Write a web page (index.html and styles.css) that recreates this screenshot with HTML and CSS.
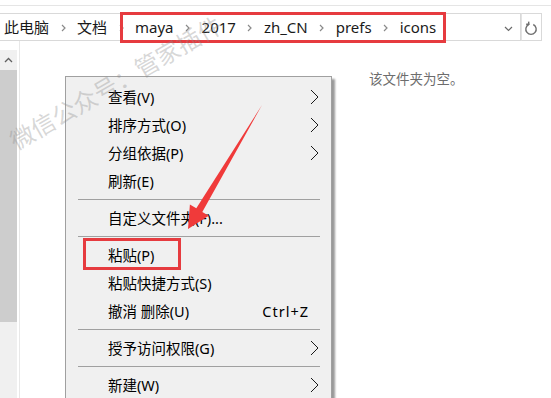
FILE: index.html
```html
<!DOCTYPE html>
<html lang="zh-CN">
<head>
    <meta charset="UTF-8">
    <meta name="viewport" content="width=device-width, initial-scale=1.0">
    <title>icons</title>
    <link rel="stylesheet" href="styles.css">
</head>
<body>
    <div class="ribbon-edge"></div>
    <div class="address-row">
        <div class="address">
            <span class="crumb">此电脑</span>
            <span class="sep"><svg width="5" height="8"><polyline points="1,1 4,4 1,7"/></svg></span>
            <span class="crumb">文档</span>
            <span class="sep"><svg width="5" height="8"><polyline points="1,1 4,4 1,7"/></svg></span>
            <span class="crumb">maya</span>
            <span class="sep"><svg width="5" height="8"><polyline points="1,1 4,4 1,7"/></svg></span>
            <span class="crumb">2017</span>
            <span class="sep"><svg width="5" height="8"><polyline points="1,1 4,4 1,7"/></svg></span>
            <span class="crumb">zh_CN</span>
            <span class="sep"><svg width="5" height="8"><polyline points="1,1 4,4 1,7"/></svg></span>
            <span class="crumb">prefs</span>
            <span class="sep"><svg width="5" height="8"><polyline points="1,1 4,4 1,7"/></svg></span>
            <span class="crumb">icons</span>
            <span class="drop"><svg width="9" height="6"><polyline points="1,1 4.5,4.5 8,1"/></svg></span>
        </div>
        <div class="refresh">
            <svg width="15" height="15" viewBox="0 0 15 15">
                <path d="M9.3 3.5 A5.2 5.2 0 1 1 4.7 3.5"/>
                <polyline points="2.2,3.2 4.9,3.3 4.6,0.7"/>
            </svg>
        </div>
    </div>

    <div class="main">
        <div class="nav">
            <div class="scroll">
                <div class="scroll-up"><svg width="9" height="6"><polyline points="1,5 4.5,1.5 8,5"/></svg></div>
                <div class="thumb"></div>
            </div>
        </div>
        <div class="content">
            <p class="empty">该文件夹为空。</p>
        </div>
    </div>

    <div class="path-mark"></div>

    <ul class="menu">
        <li class="item">查看(V)<span class="sub"><svg width="9" height="16"><polyline points="1,1 8,8 1,15"/></svg></span></li>
        <li class="item">排序方式(O)<span class="sub"><svg width="9" height="16"><polyline points="1,1 8,8 1,15"/></svg></span></li>
        <li class="item">分组依据(P)<span class="sub"><svg width="9" height="16"><polyline points="1,1 8,8 1,15"/></svg></span></li>
        <li class="item">刷新(E)</li>
        <li class="line"></li>
        <li class="item">自定义文件夹(F)...</li>
        <li class="line"></li>
        <li class="item">粘贴(P)</li>
        <li class="item">粘贴快捷方式(S)</li>
        <li class="item">撤消 删除(U)<span class="key">Ctrl+Z</span></li>
        <li class="line"></li>
        <li class="item">授予访问权限(G)<span class="sub"><svg width="9" height="16"><polyline points="1,1 8,8 1,15"/></svg></span></li>
        <li class="line"></li>
        <li class="item">新建(W)<span class="sub"><svg width="9" height="16"><polyline points="1,1 8,8 1,15"/></svg></span></li>
    </ul>

    <div class="paste-mark"></div>

    <svg class="arrow" width="90" height="135" viewBox="0 0 90 135">
        <polygon points="82,5 22.3,111.9 28.8,115.7 8,129 9.9,104.5 16.3,108.3"/>
    </svg>

    <div class="watermark">微信公众号：管家插件</div>
</body>
</html>
```

FILE: styles.css
```css
* {
    padding: 0;
    margin: 0;
    box-sizing: border-box;
}

body {
    width: 551px;
    height: 398px;
    overflow: hidden;
    position: relative;
    background: #fff;
    font-family: "Noto Sans", "Noto Sans CJK SC", sans-serif;
    color: #000;
    display: flex;
    flex-direction: column;
}

.ribbon-edge {
    height: 6px;
    border-bottom: 1px solid #e5e5e5;
}

/* address bar */
.address-row {
    display: flex;
    height: 28px;
    margin-top: 7px;
    margin-right: 9px;
}

.address {
    flex: 1;
    display: flex;
    align-items: center;
    border: 1px solid #d9d9d9;
    border-left: 0;
    padding-left: 4px;
    font-size: 15px;
    line-height: 20px;
    color: #1a1a1a;
}

.sep {
    width: 28px;
    display: flex;
    justify-content: center;
    padding-top: 1px;
}

.sep polyline {
    fill: none;
    stroke: #8a8a8a;
    stroke-width: 1.2;
}

.drop {
    margin-left: auto;
    margin-right: 7px;
    display: flex;
    padding-top: 4px;
}

.drop polyline {
    fill: none;
    stroke: #6a6a6a;
    stroke-width: 1.2;
}

.refresh {
    width: 21px;
    border: 1px solid #d9d9d9;
    border-left: 1px solid #e3e3e3;
    display: flex;
    align-items: center;
    justify-content: center;
    padding-top: 3px;
}

.refresh path,
.refresh polyline {
    fill: none;
    stroke: #6e6e6e;
    stroke-width: 1.4;
}

/* body of the window */
.main {
    flex: 1;
    display: flex;
}

.nav {
    width: 20px;
    border-right: 1px solid #e8e8e8;
    padding-top: 9px;
    display: flex;
}

.scroll {
    width: 17px;
    background: #f0f0f0;
}

.scroll-up {
    height: 20px;
    display: flex;
    justify-content: center;
    padding-top: 7px;
}

.scroll-up polyline {
    fill: none;
    stroke: #606060;
    stroke-width: 1.3;
}

.thumb {
    height: 252px;
    background: #cdcdcd;
}

.content {
    flex: 1;
}

.empty {
    margin-left: 349px;
    padding-top: 28px;
    font-size: 13.5px;
    line-height: 20px;
    color: #6d6d6d;
}

/* context menu */
.menu {
    position: absolute;
    left: 65px;
    top: 76px;
    width: 267px;
    height: 340px;
    list-style: none;
    background: #f0f0f0;
    border: 1px solid #a0a0a0;
    box-shadow: 3px 3px 2px rgba(0, 0, 0, 0.4);
    padding-top: 6px;
    font-size: 14.5px;
}

.item {
    height: 28px;
    line-height: 28px;
    display: flex;
    align-items: center;
    padding-left: 42px;
    padding-right: 12px;
}

.sub {
    margin-left: auto;
    display: flex;
}

.sub polyline {
    fill: none;
    stroke: #1a1a1a;
    stroke-width: 1;
}

.key {
    margin-left: auto;
    margin-right: 10px;
    letter-spacing: 1px;
}

.line {
    height: 1px;
    background: #a0a0a0;
    margin: 4px 11px 4px 12px;
}

/* red marks */
.path-mark {
    position: absolute;
    left: 120px;
    top: 12px;
    width: 326px;
    height: 31px;
    border: 3px solid #e63b3f;
}

.paste-mark {
    position: absolute;
    left: 83px;
    top: 238px;
    width: 98px;
    height: 32px;
    border: 3px solid #e63b3f;
}

.arrow {
    position: absolute;
    left: 180px;
    top: 100px;
}

.arrow polygon {
    fill: #f03a3a;
}

.watermark {
    position: absolute;
    left: -8px;
    top: 70px;
    width: 248px;
    text-align: center;
    font-size: 24px;
    line-height: 26px;
    color: rgba(140, 140, 140, 0.35);
    transform: rotate(-30deg);
    white-space: nowrap;
}
```
